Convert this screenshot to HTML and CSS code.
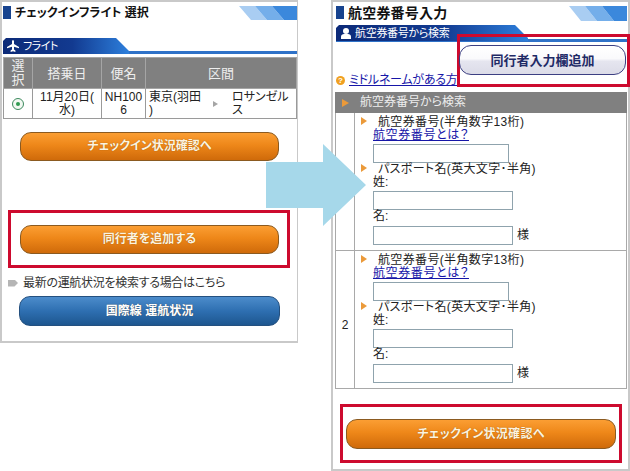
FILE: index.html
```html
<!DOCTYPE html>
<html lang="ja">
<head>
<meta charset="utf-8">
<title>チェックイン</title>
<link rel="stylesheet" href="styles.css">
</head>
<body>
<section class="panel panel-left">
  <header class="head">
    <span class="square"></span>
    <h1 class="title">チェックインフライト 選択</h1>
    <svg class="stripe" width="58" height="14" viewBox="0 0 58 14"><polygon points="0,0 16,0 28,14 12,14" fill="#a9cdf2"/><polygon points="16,0 33,0 45,14 28,14" fill="#74aeea"/><polygon points="33,0 58,0 58,14 45,14" fill="#3b88dc"/></svg>
  </header>
  <div class="tabbar tabbar-left">
    <div class="tab tab-left">
      <svg class="tab-icon" width="12" height="12" viewBox="0 0 12 12"><path d="M6 0c.6 0 1 .8 1 1.6V4l5 3v1.300L7 6.800V9.600l1.400 1V12L6 11.200 3.600 12v-1.400L5 9.600V6.800L0 8.300V7l5-3V1.600C5 .8 5.400 0 6 0z" fill="#fff"/></svg>
      <span>フライト</span>
    </div>
  </div>
  <table class="flights">
    <colgroup><col class="c1"><col class="c2"><col class="c3"><col class="c4"></colgroup>
    <thead>
      <tr><th class="th-select">選<br>択</th><th>搭乗日</th><th>便名</th><th>区間</th></tr>
    </thead>
    <tbody>
      <tr>
        <td><span class="radio"><span class="radio-dot"></span></span></td>
        <td>11月20日(<br>水)</td>
        <td>NH100<br>6</td>
        <td>
          <div class="route">
            <span class="route-from">東京(羽田<br>)</span>
            <span class="route-arrow"></span>
            <span class="route-to">ロサンゼル<br>ス</span>
          </div>
        </td>
      </tr>
    </tbody>
  </table>
  <a class="btn btn-orange btn-first">チェックイン状況確認へ</a>
  <div class="redbox redbox-left">
    <a class="btn btn-orange btn-fill">同行者を追加する</a>
  </div>
  <p class="note"><span class="note-arrow"></span>最新の運航状況を検索する場合はこちら</p>
  <a class="btn btn-blue">国際線 運航状況</a>
</section>

<section class="panel panel-right">
  <header class="head head-right">
    <span class="square"></span>
    <h1 class="title title-right">航空券番号入力</h1>
    <svg class="stripe" width="58" height="15" viewBox="0 0 58 15"><polygon points="0,0 16,0 28,15 12,15" fill="#a9cdf2"/><polygon points="16,0 33,0 45,15 28,15" fill="#74aeea"/><polygon points="33,0 58,0 58,15 45,15" fill="#3b88dc"/></svg>
  </header>
  <div class="tabbar tabbar-right">
    <div class="tab tab-right">
      <svg class="tab-icon" width="10" height="11" viewBox="0 0 10 11"><circle cx="5" cy="3" r="3" fill="#fff"/><path d="M0 11V8.500C0 7 1.500 6 3 6h4c1.500 0 3 1 3 2.500V11z" fill="#fff"/></svg>
      <span>航空券番号から検索</span>
    </div>
  </div>
  <div class="middle">
    <span class="help">?</span>
    <a class="link middle-link">ミドルネームがある方</a>
  </div>
  <table class="form">
    <colgroup><col class="f1"><col class="f2"></colgroup>
    <thead>
      <tr><th colspan="2"><span class="tri tri-head"></span>航空券番号から検索</th></tr>
    </thead>
    <tbody>
      <tr>
        <td class="num"></td>
        <td class="fields">
          <div class="label"><span class="tri"></span>航空券番号(半角数字13桁)</div>
          <a class="link block">航空券番号とは？</a>
          <input class="input input-ticket" type="text">
          <div class="label"><span class="tri"></span>パスポート名(英大文字･半角)</div>
          <div class="sub">姓:</div>
          <input class="input input-name" type="text">
          <div class="sub sub-gap">名:</div>
          <div class="with-suffix"><input class="input input-name" type="text"><span>様</span></div>
        </td>
      </tr>
      <tr>
        <td class="num">2</td>
        <td class="fields">
          <div class="label"><span class="tri"></span>航空券番号(半角数字13桁)</div>
          <a class="link block">航空券番号とは？</a>
          <input class="input input-ticket" type="text">
          <div class="label"><span class="tri"></span>パスポート名(英大文字･半角)</div>
          <div class="sub">姓:</div>
          <input class="input input-name" type="text">
          <div class="sub sub-gap">名:</div>
          <div class="with-suffix"><input class="input input-name" type="text"><span>様</span></div>
        </td>
      </tr>
    </tbody>
  </table>
  <div class="redbox redbox-bottom">
    <a class="btn btn-orange btn-fill btn-big">チェックイン状況確認へ</a>
  </div>
  <div class="redbox redbox-over">
    <a class="btn btn-white">同行者入力欄追加</a>
  </div>
</section>

<div class="arrow"></div>
```

FILE: styles.css
```css
* { box-sizing: border-box; }
html, body { margin: 0; padding: 0; }
body {
  position: relative;
  display: flex;
  align-items: flex-start;
  width: 630px;
  height: 471px;
  overflow: hidden;
  background: #fff;
  color: #222;
  font: 12px/13px "Liberation Sans", "Noto Sans CJK JP", sans-serif;
  font-feature-settings: "palt";
}
.panel {
  position: relative;
  border: 2px solid #c9c9c9;
  border-right-width: 1px;
  background: #fff;
}
.panel-left { width: 298px; height: 343px; }
.panel-right { width: 299px; height: 471px; margin-left: 33px; border-right-width: 2px; }

.head { display: flex; align-items: flex-start; height: 36px; padding: 4px 0 0 1px; }
.head-right { height: 23px; padding: 4px 1px 0 3px; }
.square { width: 8px; height: 13px; background: #17438f; flex: none; }
.title { margin: 0 0 0 4px; font-size: 12px; line-height: 14px; font-weight: 700; color: #111; flex: 1; }
.title-right { font-size: 14px; letter-spacing: .2px; }
.stripe { flex: none; }

.tabbar { border-bottom: 3px solid #2f72c8; }
.tabbar-left { height: 16px; margin-left: 1px; }
.tabbar-right { height: 17px; margin: 0 1px 0 3px; }
.tab {
  display: flex;
  align-items: center;
  height: 16px;
  gap: 4px;
  color: #fff;
  font-size: 11px;
  background: linear-gradient(90deg, #0c2a78 0%, #123a90 55%, #2d7fdc 100%);
}
.tab-left { width: 126px; padding-left: 4px; letter-spacing: -.5px; clip-path: polygon(3px 0, 113px 0, 126px 13px, 126px 16px, 0 16px, 0 3px); }
.tab-right { width: 192px; padding-left: 5px; letter-spacing: -.3px; clip-path: polygon(3px 0, 179px 0, 192px 13px, 192px 16px, 0 16px, 0 3px); }
.tab-icon { flex: none; }

.flights {
  width: 294px;
  margin: 3px 0 0 1px;
  border-collapse: collapse;
  table-layout: fixed;
  text-align: center;
}
.c1 { width: 29px; }
.c2 { width: 69px; }
.c3 { width: 44px; }
.flights th, .flights td { padding: 0 1px; border: 1px solid #9a9a9a; }
.flights th { height: 31px; background: #808080; color: #eee; font-weight: 400; font-size: 13px; border-color: #a5a5a5; }
.flights .th-select { line-height: 14px; }
.flights td { height: 30px; font-size: 12px; line-height: 13px; }
.radio {
  display: inline-flex;
  align-items: center;
  justify-content: center;
  width: 12px;
  height: 12px;
  border: 1px solid #3d8a5e;
  border-radius: 50%;
  vertical-align: middle;
  background: #f2f8f2;
}
.radio-dot { width: 4px; height: 4px; border-radius: 50%; background: #2f9a50; }
.route { display: flex; align-items: center; text-align: left; padding-left: 2px; }
.route-from { width: 64px; }
.route-arrow {
  width: 0;
  height: 0;
  margin-right: 14px;
  border-left: 5px solid #a5a5a5;
  border-top: 3px solid transparent;
  border-bottom: 3px solid transparent;
}
.route-to { flex: 1; }

.btn {
  display: flex;
  align-items: center;
  justify-content: center;
  border-radius: 11px;
  color: #fff;
  font-weight: 700;
  font-size: 12px;
  white-space: nowrap;
  text-shadow: 0 0 1px rgba(90, 50, 0, .6);
}
.btn-orange {
  height: 29px;
  border: 1px solid #8b5a20;
  background: linear-gradient(180deg, #fb9e33 0%, #ee8719 45%, #cf6a0a 100%);
  color: #fdf3df;
}
.btn-first { width: 259px; margin: 13px 0 0 18px; }
.btn-fill { width: 100%; }
.btn-blue {
  width: 261px;
  height: 30px;
  margin: 6px 0 0 17px;
  border: 1px solid #24507f;
  background: linear-gradient(180deg, #4c8ccb 0%, #2e6fb1 50%, #1d568f 100%);
}
.btn-big { height: 30px; font-size: 12px; letter-spacing: .3px; }
.btn-white {
  width: 167px;
  height: 30px;
  margin-left: -1px;
  border: 1px solid #3c3f82;
  border-radius: 12px;
  background: linear-gradient(180deg, #fff 0%, #fafafc 45%, #e5e5ef 55%, #dcdce8 100%);
  color: #1f2a66;
  font-size: 13px;
  text-shadow: none;
}

.redbox { border: 3px solid #cd0a2e; }
.redbox-left { width: 282px; height: 58px; margin: 49px 0 0 6px; padding: 12px 8px 0 9px; }
.redbox-bottom { width: 282px; height: 59px; margin: 15px 0 0 7px; padding: 12px 3px 0 3px; }
.redbox-over {
  position: absolute;
  left: 124px;
  top: 32px;
  width: 173px;
  height: 53px;
  padding: 8px 0 0 0;
}

.note { display: flex; align-items: center; margin: 8px 0 0 6px; height: 14px; color: #333; letter-spacing: -.3px; }
.note-arrow {
  width: 10px;
  height: 7px;
  margin-right: 5px;
  background: #b5b5b5;
  clip-path: polygon(0 0, 65% 0, 100% 50%, 65% 100%, 0 100%);
}

.link { color: #1616a8; text-decoration: underline; }
.block { display: block; }
.middle { display: flex; align-items: center; height: 14px; margin: 31px 0 0 3px; }
.help {
  width: 9px;
  height: 9px;
  margin-right: 4px;
  border-radius: 50%;
  background: #f0a020;
  color: #fff;
  font-size: 8px;
  line-height: 9px;
  font-weight: 700;
  text-align: center;
}
.middle-link { white-space: nowrap; letter-spacing: -.25px; }

.form {
  width: 292px;
  margin: 5px 0 0 2px;
  border-collapse: collapse;
  table-layout: fixed;
}
.f1 { width: 19px; }
.form th {
  height: 20px;
  padding: 0 0 0 6px;
  background: #808080;
  color: #eee;
  font-weight: 400;
  text-align: left;
  border: 1px solid #808080;
}
.form td { border: 1px solid #a9a9a9; height: 138px; vertical-align: top; }
.form .num { vertical-align: middle; text-align: center; padding: 12px 0 0; }
.fields { padding: 3px 0 0 6px; }
.tri {
  display: inline-block;
  width: 0;
  height: 0;
  margin-right: 11px;
  border-left: 6px solid #eb9a3a;
  border-top: 4px solid transparent;
  border-bottom: 4px solid transparent;
  vertical-align: 1px;
}
.tri-head { margin-right: 11px; border-left-width: 7px; vertical-align: -1px; }
.label { height: 13px; white-space: nowrap; letter-spacing: .35px; }
.link.block { margin-left: 12px; letter-spacing: .6px; }
.sub { height: 14px; margin-left: 12px; }
.sub-gap { height: 15px; }
.input {
  display: block;
  height: 19px;
  margin: 0 0 0 12px;
  padding: 0;
  border: 1px solid #8fa3ad;
  background: #fff;
}
.input-ticket { width: 136px; margin-top: 2px; }
.input-name { width: 140px; margin-top: 1px; }
.with-suffix { display: flex; align-items: center; gap: 4px; }
.with-suffix span { margin-top: 1px; }

.arrow {
  position: absolute;
  z-index: 2;
  left: 266px;
  top: 144px;
  width: 100px;
  height: 82px;
  background: #a6d8ea;
  clip-path: polygon(0 18px, 57px 18px, 57px 0, 100px 41px, 57px 82px, 57px 64px, 0 64px);
}
```
